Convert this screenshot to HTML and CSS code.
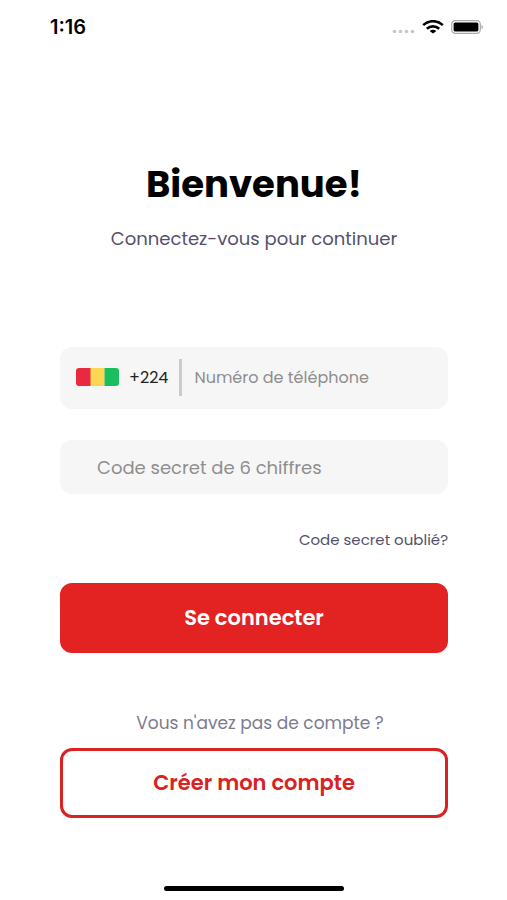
FILE: index.html
```html
<!DOCTYPE html>
<html lang="fr">
<head>
  <meta charset="UTF-8">
  <meta name="viewport" content="width=device-width, initial-scale=1.0">
  <title>Connexion</title>
  <link rel="stylesheet" href="styles.css">
</head>
<body>

<header class="status-bar">
  <span class="time">1:16</span>
  <div class="status-icons">
    <svg class="signal" width="23" height="14" viewBox="0 0 23 14" fill="#c6c6c6" aria-hidden="true">
      <circle cx="2.5" cy="11.5" r="1.8"/>
      <circle cx="8.5" cy="11.5" r="1.8"/>
      <circle cx="14.5" cy="11.5" r="1.8"/>
      <circle cx="20.5" cy="11.5" r="1.8"/>
    </svg>
    <svg width="22" height="14" viewBox="0 0 22 14" fill="none" stroke="#000" stroke-width="2.6" aria-hidden="true">
      <path d="M1.2 5.1C6.8-.1 15.2-.1 20.8 5.1"/>
      <path d="M4.8 8.7c3.6-3.1 8.8-3.1 12.4 0"/>
      <path d="M11 13.6 7.6 11c2-1.6 4.8-1.6 6.8 0z" fill="#000" stroke="none"/>
    </svg>
    <svg width="33" height="14" viewBox="0 0 33 14" aria-hidden="true">
      <rect x=".7" y=".7" width="28.6" height="12.6" rx="3.6" fill="none" stroke="#a8a8a8" stroke-width="1.2"/>
      <rect x="2.6" y="2.4" width="24.8" height="9.2" rx="1.6" fill="#000"/>
      <path d="M30.5 5c2 .8 2 3.2 0 4z" fill="#a8a8a8"/>
    </svg>
  </div>
</header>

<main class="login">
  <h1>Bienvenue!</h1>
  <p class="subtitle">Connectez-vous pour continuer</p>

  <form>
    <div class="field phone">
      <svg class="flag" width="43" height="18" viewBox="0 0 43 18" role="img" aria-label="Guinée">
        <path d="M3 0h12v18H3a3 3 0 0 1-3-3V3a3 3 0 0 1 3-3z" fill="#e8293f"/>
        <path d="M14.5 0h14v18h-14z" fill="#ffd652"/>
        <path d="M28.5 0H40a3 3 0 0 1 3 3v12a3 3 0 0 1-3 3H28.5z" fill="#1bbd5e"/>
      </svg>
      <label class="prefix" for="phone">+224</label>
      <input type="tel" id="phone" name="phone" aria-label="Numéro de téléphone" placeholder="Numéro de téléphone">
    </div>

    <div class="field secret">
      <input type="password" id="code" name="code" maxlength="6" aria-label="Code secret" placeholder="Code secret de 6 chiffres">
    </div>

    <a class="forgot" href="#">Code secret oublié?</a>

    <button class="btn btn-primary" type="submit">Se connecter</button>

    <p class="no-account">Vous n'avez pas de compte ?</p>
    <button class="btn btn-outline" type="button">Créer mon compte</button>
  </form>
</main>

<footer class="home-bar"></footer>

</body>
</html>
```

FILE: styles.css
```css
* {
  box-sizing: border-box;
}
body {
  margin: 0;
  min-height: 100vh;
  display: flex;
  flex-direction: column;
  background-color: #fff;
  font-family: Poppins, Inter, sans-serif;
}
.status-bar {
  display: flex;
  justify-content: space-between;
  align-items: center;
  height: 54px;
  padding: 0 23px 0 50px;
}
.time {
  font-family: Inter, sans-serif;
  font-size: 20px;
  font-weight: 600;
}
.status-icons {
  display: flex;
  gap: 7px;
}
.login {
  padding: 106px 59px 0 60px;
}
h1 {
  margin: 0;
  font-size: 37px;
  font-weight: 700;
  line-height: 48px;
  text-align: center;
}
.subtitle {
  margin: 19px 0 0;
  font-size: 18px;
  line-height: 24px;
  color: #54506b;
  text-align: center;
}
form {
  display: flex;
  flex-direction: column;
  margin-top: 96px;
}
.field {
  display: flex;
  align-items: center;
  border-radius: 12px;
  background-color: #f6f6f6;
}
.field input {
  flex: 1;
  min-width: 0;
  border: none;
  outline: none;
  background: none;
  font-family: inherit;
  color: #222;
}
.field input::placeholder {
  color: #8e8e8e;
}
.phone {
  height: 62px;
  padding: 0 16px 2px;
}
.prefix {
  margin: 0 11px 0 10px;
  font-size: 16px;
  color: #222;
}
.phone input {
  height: 37px;
  padding: 0 0 0 12px;
  border-left: 3px solid #cbcbcb;
  font-size: 16px;
}
.secret {
  height: 54px;
  margin-top: 31px;
  padding: 0 37px;
}
.secret input {
  padding: 0;
  font-size: 18px;
}
.forgot {
  align-self: flex-end;
  margin-top: 36px;
  font-size: 15px;
  line-height: 20px;
  color: #54506b;
  text-decoration: none;
}
.btn {
  height: 70px;
  padding: 0 0 2px;
  border: 3px solid #e32322;
  border-radius: 12px;
  font-family: inherit;
  font-size: 21px;
  font-weight: 600;
  cursor: pointer;
}
.btn-primary {
  margin-top: 33px;
  background-color: #e32322;
  color: #fff;
}
.btn-outline {
  background-color: #fff;
  border-color: #d92221;
  color: #d92221;
}
.no-account {
  margin: 58px 0 13px;
  padding-left: 12px;
  font-size: 17px;
  line-height: 24px;
  color: #7d7b8e;
  text-align: center;
}
.home-bar {
  width: 180px;
  height: 5px;
  margin: auto auto 9px;
  border-radius: 3px;
  background-color: #000;
}
```
